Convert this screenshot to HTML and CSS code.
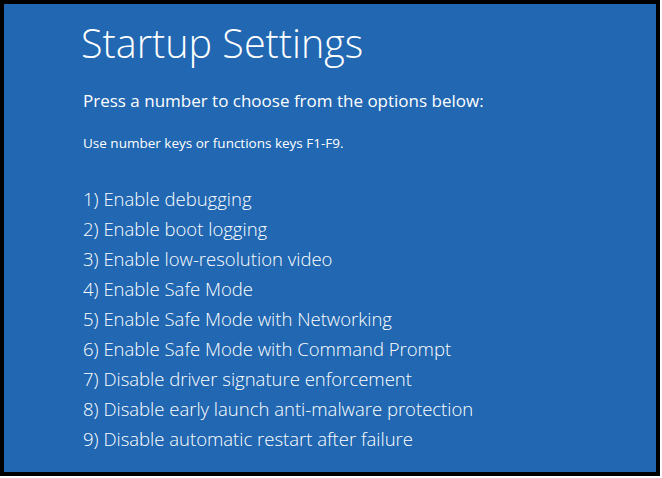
FILE: index.html
```html
<!DOCTYPE html>
<html>
<head>
  <meta charset="UTF-8">
  <link rel="stylesheet" href="styles.css">
  <title>Startup Settings</title>
</head>
<body>
  <div class="screen">
    <h1>Startup Settings</h1>
    <p class="prompt">Press a number to choose from the options below:</p>
    <p class="hint">Use number keys or functions keys F1-F9.</p>
    <ol class="options">
      <li>1) Enable debugging</li>
      <li>2) Enable boot logging</li>
      <li>3) Enable low-resolution video</li>
      <li>4) Enable Safe Mode</li>
      <li>5) Enable Safe Mode with Networking</li>
      <li>6) Enable Safe Mode with Command Prompt</li>
      <li>7) Disable driver signature enforcement</li>
      <li>8) Disable early launch anti-malware protection</li>
      <li>9) Disable automatic restart after failure</li>
    </ol>
  </div>
</body>
</html>
```

FILE: styles.css
```css
body {
  margin: 0;
  padding: 0;
  background-color: #fff;
  font-family: "Open Sans", sans-serif;
}

.screen {
  box-sizing: border-box;
  width: 660px;
  height: 476px;
  border: 4px solid #000;
  background-color: #2167b2;
  color: #fff;
  padding: 15px 0 0 79px;
}

.screen h1 {
  font-size: 39.5px;
  font-weight: 300;
  margin: 0 0 0 -2px;
  line-height: 48px;
}

.prompt {
  font-size: 17px;
  font-weight: 400;
  margin: 22px 0 0 0;
  line-height: 24px;
}

.hint {
  font-size: 13.5px;
  margin: 21px 0 0 0;
  line-height: 18px;
}

.options {
  list-style: none;
  margin: 32px 0 0 0;
  padding: 0;
}

.options li {
  font-size: 18.5px;
  line-height: 30px;
  font-weight: 300;
}
```
